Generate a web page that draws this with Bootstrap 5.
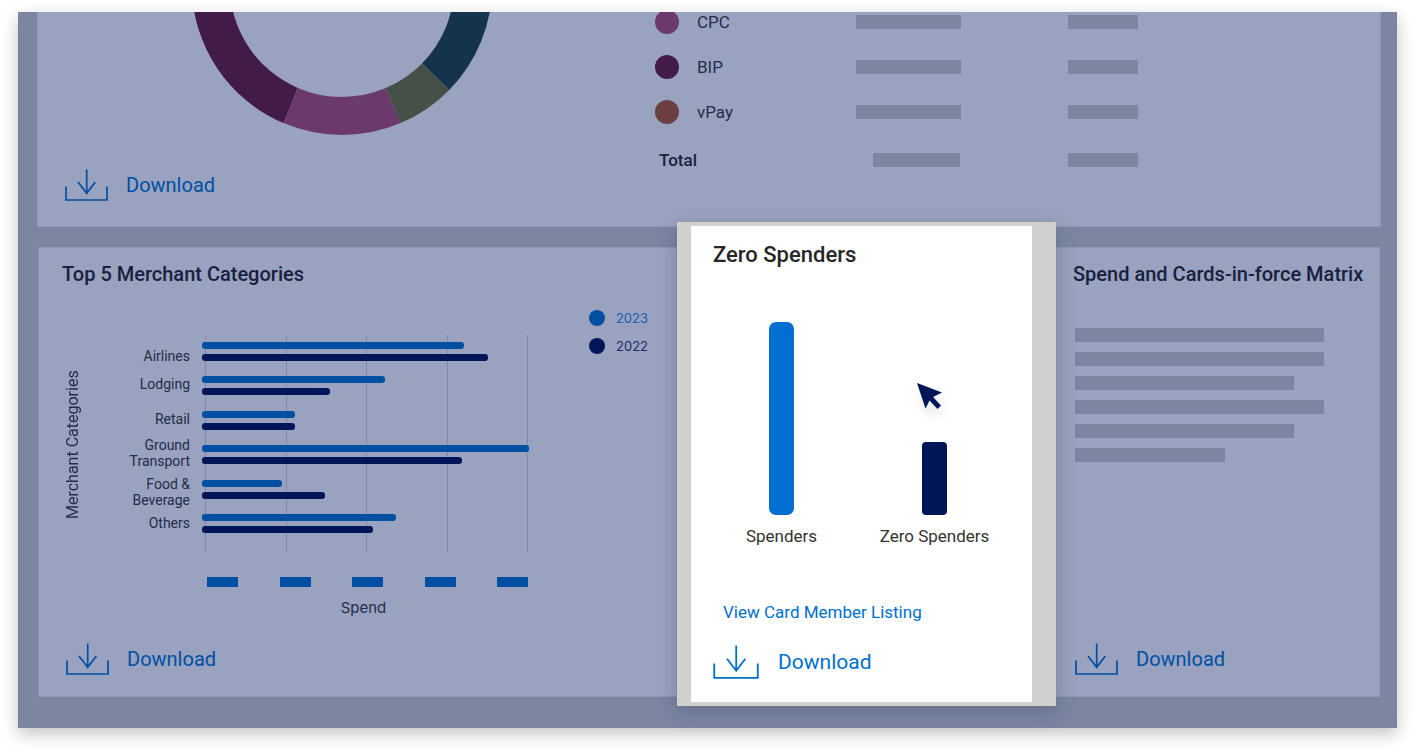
<!DOCTYPE html>
<html lang="en">
<head>
<meta charset="utf-8">
<meta name="viewport" content="width=device-width, initial-scale=1">
<title>Spend dashboard</title>
<link href="https://cdn.jsdelivr.net/npm/bootstrap@5.3.0/dist/css/bootstrap.min.css" rel="stylesheet">
<style>
  :root { --blue: #004fa3; --navy: #001659; --bright: #006fcf; --slate: #7c86a1; --panel: #99a2be; --ink: #17213f; --soft: #232d4c; }
  body { font-family: Roboto, "Liberation Sans", sans-serif; color: var(--ink); background: #fff; padding: 12px 24px 28px 18px; }
  .dash-frame { background: var(--slate); padding: 0 16px 31px 19px; box-shadow: 0 6px 16px rgba(0,0,0,.24); }
  .panel { background: var(--panel); border: 1px solid #8f98b5; border-radius: 0; color: var(--soft); }
  .panel-title { font-size: 20px; line-height: 24px; font-weight: 500; margin: 0; white-space: nowrap; color: var(--ink); }

  .summary { border-top: 0; padding: 0 0 25px 27px; overflow: hidden; display: grid; grid-template-columns: 590px 1fr; align-items: start; }
  .donut { width: 300px; height: 124px; margin-left: 127px; }
  .summary .dl { margin-top: 33px; }
  .summary-table { width: 484px; margin-top: -13px; table-layout: fixed; color: var(--soft); }
  .summary-table th, .summary-table td { height: 45px; padding: 0; vertical-align: middle; font-size: 17px; line-height: 20px; font-weight: 400; }
  .summary-table tr:last-child > * { height: 52px; font-weight: 500; }
  .summary-table tr:last-child .ph { width: 87px; margin-left: 17px; }
  .summary-table td:last-child .ph, .summary-table tr:last-child td:last-child .ph { width: 70px; margin-left: 0; }
  .summary-table tr:last-child > th { color: var(--ink); }
  .swatch { width: 24px; height: 24px; margin-right: 18px; }
  .ph { height: 14px; background: var(--slate); }
  .ph.w-col { width: 105px; }

  .dl { display: inline-flex; align-items: center; gap: 18px; color: var(--blue); font-size: 20px; line-height: 24px; text-decoration: none; align-self: flex-start; }
  .dl svg { width: 43px; height: 32px; }

  .tiles { display: grid; grid-template-columns: 639fr 379fr 324fr; margin: 20px 1px 0; }
  .tile { padding: 14px 28px 21px 27px; height: 450px; }
  .tile-merchant .panel-title { margin-left: -4px; }
  .tile-matrix { padding: 14px 16px 21px 19px; border-left: 0; }
  .tile-matrix .panel-title { margin-left: -2px; margin-bottom: 42px; }

  .merchant { margin-top: 24px; display: grid; grid-template-columns: 136px 328fr 119px; }
  .axis-y { writing-mode: vertical-rl; transform: rotate(180deg); font-size: 16px; line-height: 14px; height: 152px; margin-top: 57px; white-space: nowrap; }
  .cats { display: grid; grid-template-rows: 28px 35px 26px 39px 39px 16px; text-align: right; font-size: 14px; line-height: 16px; padding: 38px 12px 0 0; flex: 1; }
  .plot { height: 217px; margin-top: 25px; position: relative; padding: 7px 0 19px; }
  .gridlines { position: absolute; inset: 0 1px 0 3px; }
  .gridlines span { width: 1px; background: #808aa8; }
  .bars { position: relative; height: 191px; }
  .hbar { height: 7px; border-radius: 3px; }
  .hbar + .hbar { margin-top: 5px; }
  .b23 { background: var(--blue); }
  .b22 { background: var(--navy); }
  .ticks { margin: 25px 1px 0 5px; }
  .ticks span { width: 31px; height: 10px; background: var(--blue); }
  .axis-x { font-family: Inter, Roboto, sans-serif; font-size: 15px; line-height: 20px; margin-top: 11px; padding-right: 4px; text-align: center; }
  .key { padding-left: 60px; font-family: Inter, Roboto, sans-serif; font-size: 13px; line-height: 16px; white-space: nowrap; }
  .key li { display: flex; gap: 11px; margin-bottom: 12px; }
  .key i { width: 16px; height: 16px; border-radius: 50%; }

  .spotlight { position: relative; z-index: 2; background: #d0d0ce; margin: -25px 0 -9px; padding: 4px 24px 4px 14px; box-shadow: 0 6px 20px rgba(0,22,60,.22); }
  .spot-card { background: #fff; border: 0; border-radius: 0; height: 476px; padding: 17px 21px 23px 14px; color: #262626; }
  .spot-card .panel-title { padding-left: 8px; font-size: 22px; color: #262626; }
  .columns { height: 193px; margin-top: 55px; }
  .vbar { width: 25px; border-radius: 7px; background: var(--bright); }
  .vbar.short { border-radius: 4px; background: var(--navy); }
  .col-label { font-size: 17px; line-height: 20px; margin-top: 11px; text-align: center; color: #333; }
  .pointer { position: absolute; left: 210px; top: 140px; width: 62px; height: 62px; }
  .listing { font-size: 17px; line-height: 20px; color: var(--bright); text-decoration: none; margin: 56px 0 0 18px; align-self: flex-start; }
  .spot-card .dl { color: var(--bright); font-size: 21px; margin-left: 8px; gap: 19px; }
  .spot-card .dl svg { width: 46px; height: 34px; }
  .lines .ph { margin-bottom: 10px; }
</style>
</head>
<body>
<svg class="d-none" aria-hidden="true">
  <symbol id="tray" viewBox="0 0 43 32">
    <path d="M1 17.5V31h41V17.5M21.7 .5v23.600M13 13l8.700 11.300L30.300 13" fill="none" stroke="currentColor" stroke-width="1.7"/>
  </symbol>
</svg>

<main class="dash-frame">
  <section class="card panel summary">
    <div class="d-flex flex-column">
      <svg class="donut" viewBox="0 0 300 124" role="img" aria-label="Spend by product">
        <g transform="translate(150 -27.200)">
          <path d="M-150.200 0A150.200 150.200 0 0 0-58.500 138.300L-44.200 103.100A112.200 112.200 0 0 1-112.200 0Z" fill="#421b47"/>
          <path d="M-58.500 138.300A150.200 150.200 0 0 0 58.500 138.300L43.700 103.300A112.200 112.200 0 0 1-44.200 103.100Z" fill="#6b396b"/>
          <path d="M58.500 138.300A150.200 150.200 0 0 0 107.300 105.100L80.200 78.500A112.200 112.200 0 0 1 43.700 103.300Z" fill="#475047"/>
          <path d="M107.300 105.100A150.200 150.200 0 0 0 150.200 0H112.200A112.200 112.200 0 0 1 80.200 78.500Z" fill="#14334d"/>
        </g>
      </svg>
      <a class="dl" href="#"><svg aria-hidden="true"><use href="#tray"/></svg>Download</a>
    </div>
    <table class="summary-table">
      <colgroup><col style="width:201px"><col style="width:212px"><col style="width:71px"></colgroup>
      <tbody>
        <tr><th scope="row"><span class="d-flex align-items-center"><i class="swatch rounded-circle" style="background:#6b396b"></i>CPC</span></th><td><div class="ph w-col"></div></td><td><div class="ph"></div></td></tr>
        <tr><th scope="row"><span class="d-flex align-items-center"><i class="swatch rounded-circle" style="background:#421b47"></i>BIP</span></th><td><div class="ph w-col"></div></td><td><div class="ph"></div></td></tr>
        <tr><th scope="row"><span class="d-flex align-items-center"><i class="swatch rounded-circle" style="background:#6d3e42"></i>vPay</span></th><td><div class="ph w-col"></div></td><td><div class="ph"></div></td></tr>
        <tr><th scope="row" class="ps-1">Total</th><td><div class="ph"></div></td><td><div class="ph"></div></td></tr>
      </tbody>
    </table>
  </section>

  <div class="tiles">
    <section class="card panel tile tile-merchant">
      <h2 class="panel-title">Top 5 Merchant Categories</h2>
      <div class="merchant">
        <div class="d-flex">
          <div class="axis-y">Merchant Categories</div>
          <div class="cats">
            <span>Airlines</span><span>Lodging</span><span>Retail</span>
            <span>Ground<br>Transport</span><span>Food &amp;<br>Beverage</span><span>Others</span>
          </div>
        </div>
        <div>
          <div class="plot">
            <div class="gridlines d-flex justify-content-between"><span></span><span></span><span></span><span></span><span></span></div>
            <div class="bars d-flex flex-column justify-content-between">
              <div><div class="hbar b23" style="width:80%"></div><div class="hbar b22" style="width:87.500%"></div></div>
              <div><div class="hbar b23" style="width:56%"></div><div class="hbar b22" style="width:39%"></div></div>
              <div><div class="hbar b23" style="width:28.400%"></div><div class="hbar b22" style="width:28.400%"></div></div>
              <div><div class="hbar b23" style="width:100%"></div><div class="hbar b22" style="width:79.600%"></div></div>
              <div><div class="hbar b23" style="width:24.500%"></div><div class="hbar b22" style="width:37.600%"></div></div>
              <div><div class="hbar b23" style="width:59.300%"></div><div class="hbar b22" style="width:52.300%"></div></div>
            </div>
          </div>
          <div class="ticks d-flex justify-content-between"><span></span><span></span><span></span><span></span><span></span></div>
          <div class="axis-x">Spend</div>
        </div>
        <ul class="key list-unstyled mb-0">
          <li style="color:#1f5fae"><i class="b23"></i>2023</li>
          <li style="color:#1c2c69"><i class="b22"></i>2022</li>
        </ul>
      </div>
      <a class="dl mt-auto" href="#"><svg aria-hidden="true"><use href="#tray"/></svg>Download</a>
    </section>

    <section class="spotlight">
      <div class="card spot-card">
        <h2 class="panel-title">Zero Spenders</h2>
        <div class="columns d-flex align-items-end">
          <div class="w-50 h-100 d-flex justify-content-center align-items-end"><div class="vbar" style="height:100%"></div></div>
          <div class="w-50 h-100 d-flex justify-content-center align-items-end"><div class="vbar short" style="height:38%"></div></div>
        </div>
        <div class="d-flex">
          <div class="col-label w-50">Spenders</div>
          <div class="col-label w-50">Zero Spenders</div>
        </div>
        <svg class="pointer" viewBox="0 0 62 62" aria-hidden="true">
          <path d="M16 17l25 9.500-9 4.500 8 8.500-3.500 3.500-8-8.500-4 8z" fill="#001659" style="filter:drop-shadow(2px 8px 6px rgba(0,0,0,.1))"/>
        </svg>
        <a class="listing" href="#">View Card Member Listing</a>
        <a class="dl mt-auto" href="#"><svg aria-hidden="true"><use href="#tray"/></svg>Download</a>
      </div>
    </section>

    <section class="card panel tile tile-matrix">
      <h2 class="panel-title">Spend and Cards-in-force Matrix</h2>
      <div class="lines">
        <div class="ph" style="width:86.500%"></div>
        <div class="ph" style="width:86.500%"></div>
        <div class="ph" style="width:76.100%"></div>
        <div class="ph" style="width:86.500%"></div>
        <div class="ph" style="width:76.100%"></div>
        <div class="ph" style="width:52%"></div>
      </div>
      <a class="dl mt-auto" href="#"><svg aria-hidden="true"><use href="#tray"/></svg>Download</a>
    </section>
  </div>
</main>
<script src="https://cdn.jsdelivr.net/npm/bootstrap@5.3.0/dist/js/bootstrap.bundle.min.js"></script>
</body>
</html>
